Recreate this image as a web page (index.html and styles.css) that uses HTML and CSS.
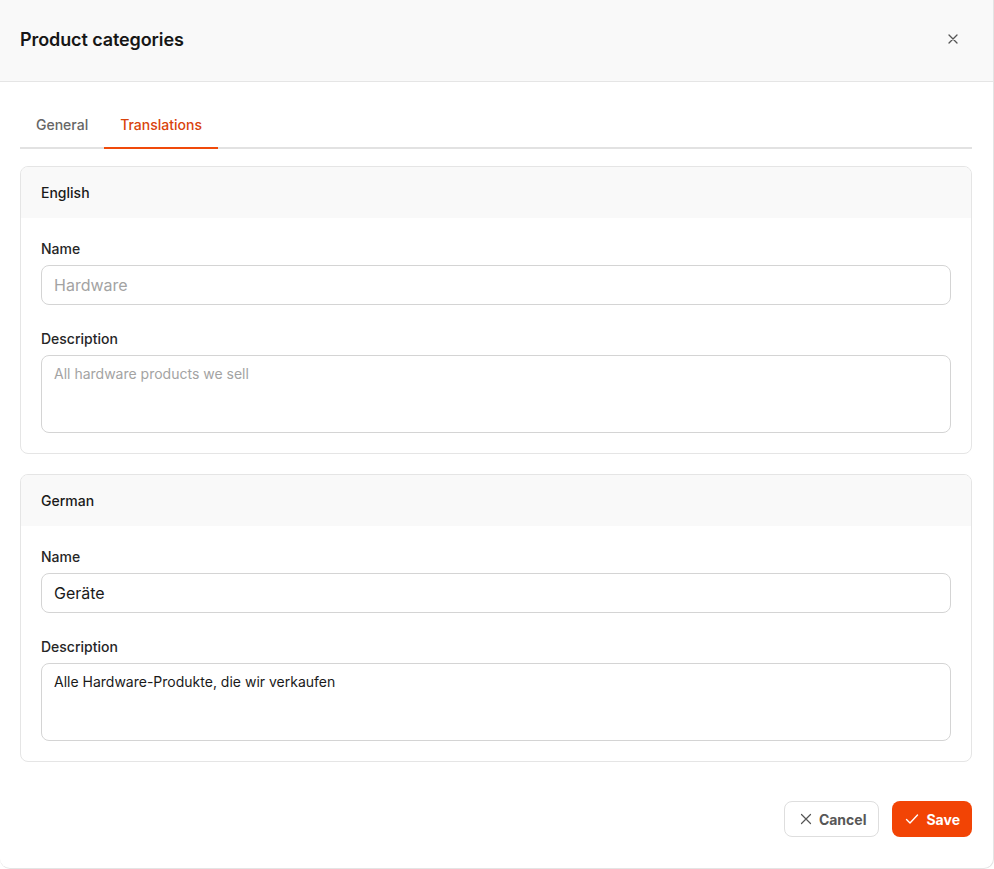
FILE: index.html
```html
<!DOCTYPE html>
<html lang="en">
<head>
  <meta charset="UTF-8" />
  <meta name="viewport" content="width=device-width, initial-scale=1.0" />
  <title>Product categories</title>
  <link rel="stylesheet" href="styles.css">
</head>
<body>
  <div class="modal">
    <div class="modal-header">
      <h2>Product categories</h2>
      <button class="close-btn" aria-label="Close">
        <svg width="12" height="12" viewBox="0 0 12 12"><path d="M2 2L10 10M10 2L2 10" stroke="#555" stroke-width="1.3" stroke-linecap="round" fill="none"/></svg>
      </button>
    </div>
    <div class="modal-body">
      <div class="tabs">
        <div class="tab">General</div>
        <div class="tab active">Translations</div>
      </div>

      <div class="card">
        <div class="card-header">English</div>
        <div class="card-body">
          <label class="field">
            <span class="label">Name</span>
            <input class="input" type="text" placeholder="Hardware" />
          </label>
          <label class="field">
            <span class="label">Description</span>
            <textarea class="textarea" placeholder="All hardware products we sell"></textarea>
          </label>
        </div>
      </div>

      <div class="card">
        <div class="card-header">German</div>
        <div class="card-body">
          <label class="field">
            <span class="label">Name</span>
            <input class="input" type="text" value="Geräte" />
          </label>
          <label class="field">
            <span class="label">Description</span>
            <textarea class="textarea">Alle Hardware-Produkte, die wir verkaufen</textarea>
          </label>
        </div>
      </div>

      <div class="footer">
        <button class="btn btn-cancel">
          <svg width="12" height="12" viewBox="0 0 12 12"><path d="M1.5 1.5L10.5 10.5M10.5 1.5L1.5 10.5" stroke="#555" stroke-width="1.2" stroke-linecap="round" fill="none"/></svg>
          Cancel
        </button>
        <button class="btn btn-save">
          <svg width="14" height="12" viewBox="0 0 14 12"><path d="M1.5 6.5L5 10L12.5 2" stroke="#fff" stroke-width="1.4" stroke-linecap="round" stroke-linejoin="round" fill="none"/></svg>
          Save
        </button>
      </div>
    </div>
  </div>
</body>
</html>
```

FILE: styles.css
```css
* { margin: 0; padding: 0; box-sizing: border-box; }
body {
  font-family: Inter, 'Noto Sans', sans-serif;
  background: #ffffff;
  color: #1a1a1a;
}
.modal {
  width: 994px;
  height: 869px;
  background: #fff;
  border-right: 1px solid #e4e4e4;
  border-bottom: 1px solid #e4e4e4;
  border-radius: 0 0 10px 10px;
  overflow: hidden;
}
.modal-header {
  height: 82px;
  background: #f9f9f9;
  border-bottom: 1px solid #e5e5e5;
  display: flex;
  align-items: center;
  justify-content: space-between;
  padding: 0 30px 3px 20px;
}
.modal-header h2 {
  font-size: 18px;
  font-weight: 600;
  color: #161616;
  letter-spacing: -0.1px;
}
.close-btn {
  border: none;
  background: none;
  width: 20px;
  height: 20px;
  display: flex;
  align-items: center;
  justify-content: center;
  cursor: pointer;
}
.modal-body {
  padding: 19px 21px 0 20px;
}
.tabs {
  display: flex;
  border-bottom: 2px solid #e2e2e2;
  margin-bottom: 17px;
}
.tab {
  height: 48px;
  padding: 0 16px;
  display: flex;
  align-items: center;
  font-size: 14px;
  font-weight: 500;
  color: #666;
  margin-bottom: -2px;
  border-bottom: 2px solid transparent;
}
.tab.active {
  color: #d9430c;
  border-bottom-color: #f04a0a;
}
.card {
  border: 1px solid #e5e5e5;
  border-radius: 8px;
  overflow: hidden;
  margin-bottom: 20px;
}
.card-header {
  height: 51px;
  background: #f9f9f9;
  display: flex;
  align-items: center;
  padding: 0 20px;
  font-size: 14px;
  font-weight: 500;
  color: #1a1a1a;
}
.card-body {
  padding: 21px 20px 20px 20px;
  display: flex;
  flex-direction: column;
  gap: 24px;
}
.field {
  display: flex;
  flex-direction: column;
  gap: 6px;
}
.label {
  font-size: 14px;
  font-weight: 500;
  line-height: 20px;
  color: #262626;
}
.input, .textarea {
  width: 100%;
  border: 1px solid #d4d4d4;
  border-radius: 8px;
  font-family: Inter, 'Noto Sans', sans-serif;
  color: #1a1a1a;
  background: #fff;
  outline: none;
}
.input {
  height: 40px;
  padding: 0 12px;
  font-size: 16px;
}
.textarea {
  height: 78px;
  padding: 8px 12px;
  font-size: 14px;
  line-height: 20px;
  resize: none;
}
.input::placeholder, .textarea::placeholder {
  color: #a3a3a3;
}
.footer {
  display: flex;
  justify-content: flex-end;
  gap: 13px;
  padding-top: 19px;
}
.btn {
  height: 36px;
  border-radius: 8px;
  font-family: Inter, 'Noto Sans', sans-serif;
  font-size: 14px;
  font-weight: 700;
  display: flex;
  align-items: center;
  gap: 7px;
  cursor: pointer;
}
.btn-cancel {
  background: #fff;
  border: 1px solid #dedede;
  color: #575757;
  padding: 0 12px 0 15px;
}
.btn-save {
  background: #f24405;
  border: none;
  color: #fff;
  padding: 0 12px 0 13px;
}
```
